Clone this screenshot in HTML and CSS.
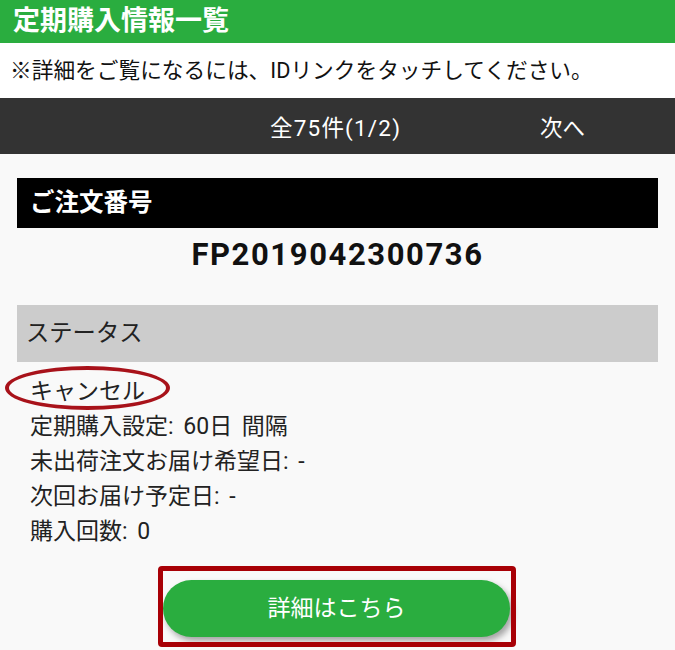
FILE: index.html
```html
<!DOCTYPE html>
<html lang="ja">
<head>
<meta charset="utf-8">
<link rel="stylesheet" href="styles.css">
</head>
<body>
<header class="title-bar">定期購入情報一覧</header>
<p class="notice">※詳細をご覧になるには、IDリンクをタッチしてください。</p>
<nav class="pager">
  <span class="pager-count">全75件(1/2)</span>
  <a class="pager-next">次へ</a>
</nav>
<main class="content">
  <section class="card">
    <h2 class="card-head">ご注文番号</h2>
    <div class="order-no">FP2019042300736</div>
    <h3 class="status-head">ステータス</h3>
    <div class="status-body">
      <span class="mark-ellipse"></span>
      <p class="line">キャンセル</p>
      <p class="line">定期購入設定: 60日 間隔</p>
      <p class="line">未出荷注文お届け希望日: -</p>
      <p class="line">次回お届け予定日: -</p>
      <p class="line">購入回数: 0</p>
      <div class="btn-wrap">
        <span class="mark-rect"></span>
        <a class="detail-btn">詳細はこちら</a>
      </div>
    </div>
  </section>
</main>
</body>
</html>
```
FILE: styles.css
```css
* { box-sizing: border-box; }
html, body {
  margin: 0;
  padding: 0;
  background: #f9f9f9;
  font-family: Roboto, "Noto Sans CJK JP", sans-serif;
  color: #222;
}
.title-bar {
  height: 43px;
  background: #2aad3f;
  color: #fff;
  font-weight: bold;
  font-size: 27px;
  line-height: 43px;
  padding-left: 13px;
}
.notice {
  margin: 0;
  height: 55px;
  background: #fff;
  font-size: 21.7px;
  line-height: 55px;
  padding-left: 10px;
  color: #111;
}
.pager {
  height: 56px;
  background: #333;
  color: #fff;
  display: flex;
  align-items: center;
  font-size: 22.5px;
}
.pager-count {
  margin-left: 270px;
  width: 270px;
  letter-spacing: 1.2px;
}
.content {
  padding: 24px 17px 0;
}
.card {
  position: relative;
  background: #f9f9f9;
}
.card-head {
  margin: 0;
  height: 50px;
  background: #000;
  color: #fff;
  font-size: 24.5px;
  font-weight: bold;
  line-height: 50px;
  padding-left: 13px;
}
.order-no {
  height: 77px;
  text-align: center;
  font-weight: bold;
  font-size: 31px;
  letter-spacing: 1.6px;
  padding-top: 9px;
  line-height: 36px;
  color: #111;
}
.status-head {
  margin: 0;
  height: 57px;
  background: #ccc;
  font-weight: normal;
  font-size: 23.3px;
  line-height: 57px;
  padding-left: 9px;
  color: #222;
}
.status-body {
  position: relative;
  padding: 12px 0 20px 13px;
}
.line {
  margin: 0;
  font-size: 23px;
  line-height: 35px;
  word-spacing: 4px;
}
.mark-ellipse {
  position: absolute;
  left: -12px;
  top: 4px;
  width: 165px;
  height: 44px;
  border: 4.5px solid #a8121a;
  border-radius: 50%;
}
.btn-wrap {
  position: relative;
  width: 347px;
  margin: 31px 0 0 133px;
}
.detail-btn {
  display: block;
  height: 57px;
  border-radius: 28.5px;
  background: #2aad3f;
  color: #fff;
  text-align: center;
  font-size: 23px;
  line-height: 57px;
  box-shadow: 3px 4px 6px rgba(0,0,0,0.35);
}
.mark-rect {
  position: absolute;
  left: -5px;
  right: -6px;
  top: -14px;
  bottom: -10px;
  border: 5px solid #a80006;
  border-radius: 4px;
  z-index: 1;
}
```
